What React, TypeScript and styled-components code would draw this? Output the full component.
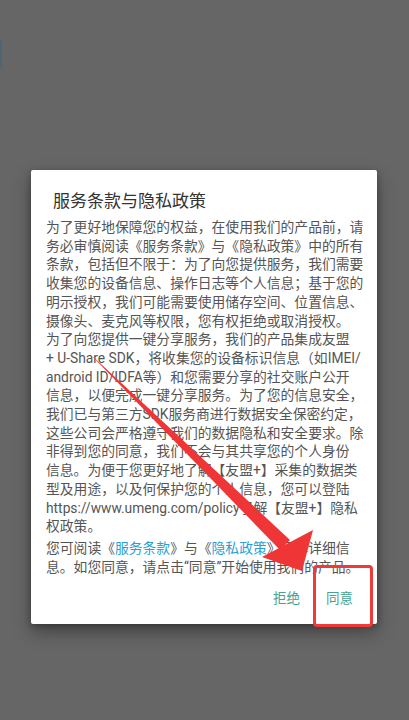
import React from "react";
import styled, { createGlobalStyle } from "styled-components";

const Global = createGlobalStyle`
  html, body { margin: 0; padding: 0; background: #666666; }
  body { font-family: "Roboto", "Noto Sans CJK SC", sans-serif; }
`;

const Screen = styled.div`
  position: relative;
  width: 409px;
  height: 720px;
  background: #666666;
  overflow: hidden;
  padding-top: 170px;
  box-sizing: border-box;
`;

const EdgeStrip = styled.div`
  position: absolute;
  left: 0;
  top: 40px;
  width: 2px;
  height: 28px;
  background: #4f6475;
`;

const Dialog = styled.div`
  width: 346px;
  height: 454px;
  margin-left: 31px;
  background: #ffffff;
  border-radius: 2px;
  box-shadow: 0 8px 18px rgba(0, 0, 0, 0.35), 0 2px 6px rgba(0, 0, 0, 0.25);
  box-sizing: border-box;
  padding: 18px 12px 9px 15px;
  display: flex;
  flex-direction: column;
`;

const Title = styled.h2`
  margin: 0 0 0 7px;
  font-family: "Noto Sans CJK SC", sans-serif;
  font-weight: 400;
  font-size: 17px;
  line-height: 24px;
  color: #333333;
`;

const Body = styled.div`
  margin-top: 6px;
  display: flex;
  flex-direction: column;
  gap: 3px;
`;

const Para = styled.p`
  margin: 0;
  font-family: "Roboto", "Noto Sans CJK SC", sans-serif;
  font-size: 13.8px;
  line-height: 18.7px;
  color: #555555;
  white-space: nowrap;
`;

const Link = styled.span`
  color: #2b9fd4;
`;

const Spacer = styled.div`
  flex: 1;
`;

const Actions = styled.div`
  margin-top: 2px;
  height: 36px;
  display: flex;
  justify-content: flex-end;
  align-items: center;
  gap: 2px;
`;

const ActionButton = styled.button`
  border: none;
  background: transparent;
  padding: 0 12px;
  height: 36px;
  font-family: "Noto Sans CJK SC", sans-serif;
  font-size: 13.5px;
  color: #44a393;
  cursor: pointer;
`;

const Highlight = styled.div`
  position: absolute;
  left: 313px;
  top: 565px;
  width: 60px;
  height: 62px;
  border: 3px solid #f03a3a;
  border-radius: 4px;
  box-sizing: border-box;
`;

const ArrowSvg = styled.svg`
  position: absolute;
  left: 0;
  top: 0;
  pointer-events: none;
`;

const lines1 = [
  "为了更好地保障您的权益，在使用我们的产品前，请",
  "务必审慎阅读《服务条款》与《隐私政策》中的所有",
  "条款，包括但不限于：为了向您提供服务，我们需要",
  "收集您的设备信息、操作日志等个人信息；基于您的",
  "明示授权，我们可能需要使用储存空间、位置信息、",
  "摄像头、麦克风等权限，您有权拒绝或取消授权。",
  "为了向您提供一键分享服务，我们的产品集成友盟",
  "+ U-Share SDK，将收集您的设备标识信息（如IMEI/",
  "android ID/IDFA等）和您需要分享的社交账户公开",
  "信息，以便完成一键分享服务。为了您的信息安全，",
  "我们已与第三方SDK服务商进行数据安全保密约定，",
  "这些公司会严格遵守我们的数据隐私和安全要求。除",
  "非得到您的同意，我们不会与其共享您的个人身份",
  "信息。为便于您更好地了解【友盟+】采集的数据类",
  "型及用途，以及何保护您的个人信息，您可以登陆",
  "https://www.umeng.com/policy了解【友盟+】隐私",
  "权政策。",
];

export default function App() {
  return (
    <>
      <Global />
      <Screen>
        <EdgeStrip />
        <Dialog>
          <Title>服务条款与隐私政策</Title>
          <Body>
            <Para>
              {lines1.map((l, i) => (
                <React.Fragment key={i}>
                  {l}
                  {i < lines1.length - 1 && <br />}
                </React.Fragment>
              ))}
            </Para>
            <Para>
              您可阅读《<Link>服务条款</Link>》与《<Link>隐私政策</Link>》了解详细信
              <br />
              息。如您同意，请点击“同意”开始使用我们的产品。
            </Para>
          </Body>
          <Spacer />
          <Actions>
            <ActionButton>拒绝</ActionButton>
            <ActionButton>同意</ActionButton>
          </Actions>
        </Dialog>
        <ArrowSvg width="409" height="720" viewBox="0 0 409 720">
          <polygon
            points="92.2,356.2 94,357.4 290,540 280,550"
            fill="#ef3535"
          />
          <polygon points="262,557 313,530 302,571" fill="#ef3535" />
        </ArrowSvg>
        <Highlight />
      </Screen>
    </>
  );
}
